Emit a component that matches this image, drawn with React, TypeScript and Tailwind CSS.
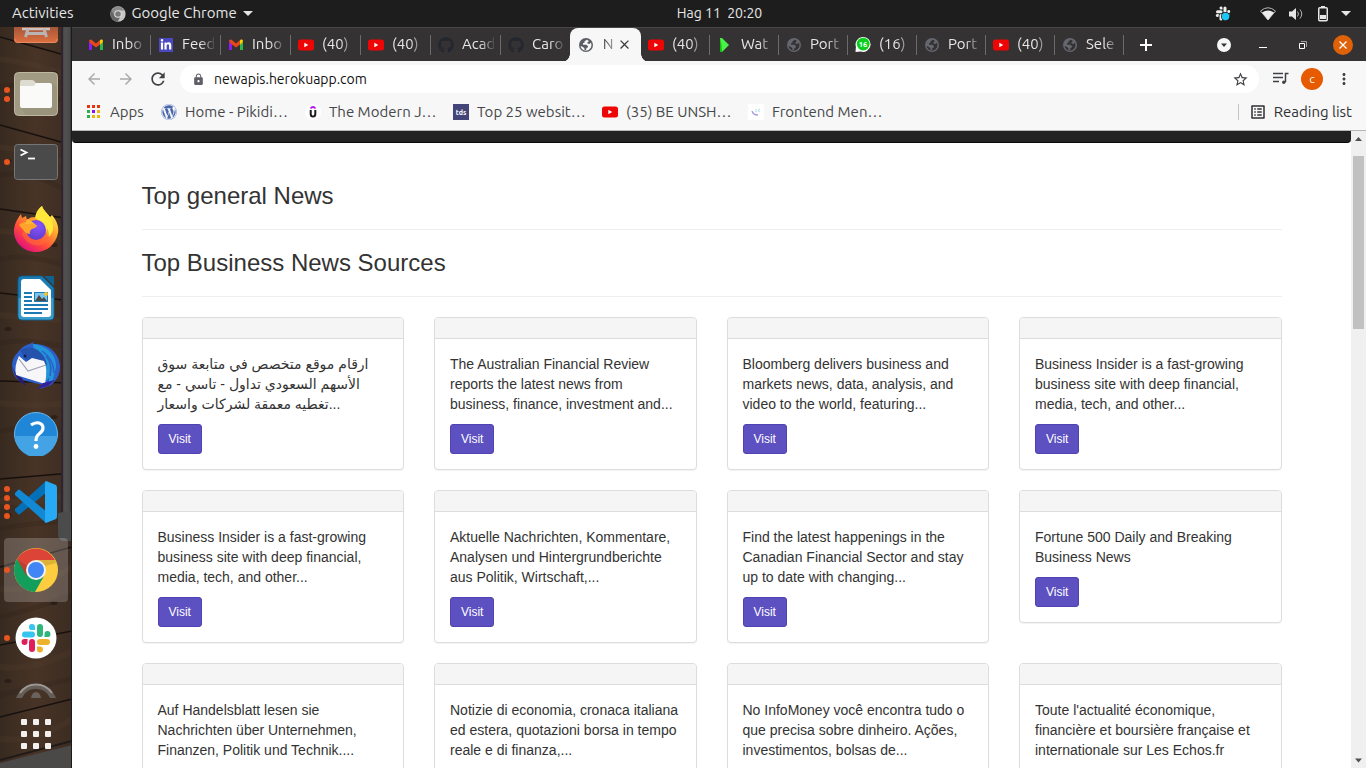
import type { ReactNode } from "react";
import { FaGithub, FaLinkedinIn, FaWordpress } from "react-icons/fa";
import {
  MdArrowBack,
  MdArrowForward,
  MdClose,
  MdLock,
  MdMoreVert,
  MdOutlineListAlt,
  MdRefresh,
  MdStarBorder,
} from "react-icons/md";

const WALL_SEAMS = [
  { y: 10, end: 30 },
  { y: 98, end: 118 },
  { y: 182, end: 192 },
  { y: 266, end: 274 },
  { y: 354, end: 356 },
  { y: 452, end: 446 },
  { y: 540, end: 520 },
  { y: 618, end: 604 },
  { y: 690, end: 672 },
];

function WoodBackdrop() {
  return (
    <svg className="absolute inset-0 h-full w-full" viewBox="0 0 72 741" preserveAspectRatio="none" aria-hidden="true">
      <defs>
        <linearGradient id="wood" x1="0" x2="1" y1="0" y2="0">
          <stop offset="0" stopColor="#382a20" />
          <stop offset="0.5" stopColor="#483426" />
          <stop offset="1" stopColor="#3c2c22" />
        </linearGradient>
        <linearGradient id="frame" x1="0" x2="1" y1="0" y2="0">
          <stop offset="0" stopColor="#3e3b40" />
          <stop offset="0.3" stopColor="#525253" />
          <stop offset="0.75" stopColor="#4a4a4b" />
          <stop offset="1" stopColor="#232323" />
        </linearGradient>
      </defs>
      <rect width="72" height="741" fill="url(#wood)" />
      {WALL_SEAMS.map(({ y, end }, i) => (
        <g key={y}>
          <path d={`M0 ${y} L72 ${end}`} stroke="#17110e" strokeWidth="1.400" fill="none" />
          <path d={`M0 ${y + 22} Q34 ${y + 26} 72 ${end + 20}`} stroke="#553e2d" strokeWidth="6" fill="none" opacity="0.25" />
          <path d={`M0 ${y + 50} Q28 ${y + 44} 72 ${end + 48}`} stroke="#2a1e17" strokeWidth="5" fill="none" opacity="0.25" />
          <ellipse cx={i % 2 ? 8 : 54} cy={y + 36} rx="3.500" ry="2" fill="#1f1611" opacity="0.6" />
        </g>
      ))}
      <rect x="62" width="10" height="514" fill="url(#frame)" />
      <rect x="61" width="2" height="485" fill="#2f2430" />
      <path d="M58 486 L72 484 V514 H62 Q58 512 58 506Z" fill="#4b4b4c" />
      <path d="M0 741 V736 L72 718 V741Z" fill="#4a4948" />
      <path d="M0 733 L72 714" stroke="#211b18" strokeWidth="2" />
      <rect x="71" width="1" height="741" fill="#1b1b1b" />
    </svg>
  );
}

function SoftwareIcon() {
  return (
    <svg width="44" height="17" viewBox="0 0 44 17">
      <defs>
        <linearGradient id="bag" x1="0" x2="0" y1="0" y2="1">
          <stop offset="0" stopColor="#a4563a" />
          <stop offset="1" stopColor="#e0703f" />
        </linearGradient>
      </defs>
      <path d="M0 0H44V12Q44 16 40 16H4Q0 16 0 12Z" fill="url(#bag)" />
      <path d="M0.500 12Q0.500 15.500 4 15.500H40Q43.500 15.500 43.500 12" fill="none" stroke="#e78a63" />
      <path d="M8 2H36" stroke="#c9c4c1" strokeWidth="2.500" />
      <path d="M14 2L11.500 10M30 2L32.500 10M13 6.500H31" stroke="#b9b4b2" strokeWidth="3" fill="none" />
    </svg>
  );
}

function FilesIcon() {
  return (
    <svg width="44" height="44" viewBox="0 0 44 44">
      <rect x="0.500" y="0.500" width="43" height="43" rx="4" fill="#a29b84" stroke="#bdb8a4" />
      <path d="M7 36L38 10L43 15V40L40 43H12Z" fill="#8f8974" opacity="0.4" />
      <path d="M6 10Q6 8 8 8H18Q20 8 21 10L23 12H36V20H6Z" fill="#dedbd0" />
      <path d="M6 14H20L22 11H36Q38 11 38 13V34Q38 36 36 36H8Q6 36 6 34Z" fill="#fafaf9" />
    </svg>
  );
}

function TerminalIcon() {
  return (
    <svg width="44" height="36" viewBox="0 0 44 36">
      <rect x="0.500" y="0.500" width="43" height="35" rx="3" fill="#4a4a4a" stroke="#767676" />
      <path d="M6.500 5.500L12.500 8.500L6.500 11.500" fill="none" stroke="#fff" strokeWidth="1.800" />
      <path d="M14 14.500H21" stroke="#fff" strokeWidth="1.800" />
    </svg>
  );
}

function FirefoxIcon() {
  return (
    <svg width="46" height="48" viewBox="0 0 46 48">
      <defs>
        <linearGradient id="ffBody" x1="0.85" y1="0.1" x2="0.25" y2="0.95">
          <stop offset="0" stopColor="#fff44f" />
          <stop offset="0.35" stopColor="#ffa22e" />
          <stop offset="0.7" stopColor="#ff4a3c" />
          <stop offset="1" stopColor="#e3127b" />
        </linearGradient>
        <radialGradient id="ffGlobe" cx="0.6" cy="0.3" r="0.8">
          <stop offset="0" stopColor="#8a52ff" />
          <stop offset="1" stopColor="#5a3bc4" />
        </radialGradient>
      </defs>
      <path d="M29 0C30 5 34 7 37 11L39 9C44 15 46 21 45 27C43 38 34 46 23 46C11 46 1 37 1 25C1 19 4 13 8 8L9 12L13 10L14 14C18 10 22 12 23 11Q24 4 29 0Z" fill="url(#ffBody)" />
      <path d="M29 0C31 6 39 10 40 19Q41 27 35 31L30 17L22 12Q23 4 29 0Z" fill="#ffe83c" />
      <circle cx="23" cy="24" r="10" fill="url(#ffGlobe)" />
      <path d="M13 20Q13 34 24 34Q33 33 34 22Q40 34 28 39Q14 41 9 28Z" fill="#ff6a35" opacity="0.6" />
      <path d="M6 19C9 15 15 16 17 18C21 18 24 19 24 20Q23 22 19 23Q16 25 17 28C12 28 10 23 6 19Z" fill="#ffa32b" />
      <path d="M14 13L12 18L18 18L24 20Q18 14 14 13Z" fill="#ffb72d" />
    </svg>
  );
}

function WriterIcon() {
  return (
    <svg width="38" height="46" viewBox="0 0 38 46">
      <path d="M5 1H25L37 13V41Q37 45 33 45H5Q1 45 1 41V5Q1 1 5 1Z" fill="#1b7cb3" stroke="#0e5b87" />
      <path d="M1.500 23H36.500V41Q36.500 44.500 33 44.500H5Q1.500 44.500 1.500 41Z" fill="#3b9bc9" />
      <path d="M27 1H37V11Z" fill="#0f628f" />
      <path d="M7 4H23L34 15V39Q34 42 31 42H7Q4 42 4 39V7Q4 4 7 4Z" fill="#fff" />
      <path d="M7 18H15M7 22H15M7 26H15M7 30H31M7 34H31M7 38H25" stroke="#1c7bb4" strokeWidth="2" />
      <rect x="17.500" y="17.500" width="13" height="9" fill="#7cc4e8" stroke="#1c7bb4" />
      <path d="M18 26L22 20L25 24L27 22L30 26Z" fill="#4a4a4a" />
      <circle cx="29" cy="19" r="2" fill="#f4c430" />
    </svg>
  );
}

function ThunderbirdIcon() {
  return (
    <svg width="48" height="48" viewBox="0 0 48 48">
      <path d="M6 10C11 3 18 2 22 0L21 2C36 1 48 11 48 25C48 34 43 41 37 44L28 47L31 43L6 37L12 42C4 38 0 31 0 24Q0 16 6 10Z" fill="#2c5fc9" />
      <path d="M21 2C33 3 45 12 44 25L41 38L37 41L37 35L33 41C35 28 31 17 22 13Z" fill="#2296d8" />
      <path d="M34 14Q41 22 38 34M30 9Q42 17 42 31" fill="none" stroke="#2c5fc9" strokeWidth="1.500" />
      <path d="M8 8Q20 2 28 10Q34 15 35 24L24 18L15 19Z" fill="#2452ad" />
      <path d="M7 14L14 20L20 16L32 19Q36 26 33 42L4 33Q2 24 7 14Z" fill="#f7f7fa" />
      <path d="M7 17L16 29L34 23" fill="none" stroke="#9ea3b5" strokeWidth="1.200" />
      <path d="M0 24Q3 38 14 44L10 36L4 33Z" fill="#281b70" />
      <path d="M31 41L25 47L36 44L43 38Z" fill="#33239b" />
      <circle cx="13" cy="14" r="1.500" fill="#14204b" />
    </svg>
  );
}

function HelpIcon() {
  return (
    <svg width="44" height="44" viewBox="0 0 44 44">
      <circle cx="22" cy="22" r="21.500" fill="#2087d8" stroke="#69b9ee" />
      <path d="M1 24H43A21 21 0 0 1 1 24Z" fill="#43a3e4" />
      <path d="M17 13Q21 10 25 11Q29 12 29 16Q29 19 25 22Q22 24 22 29" fill="none" stroke="#fff" strokeWidth="3.200" />
      <circle cx="22" cy="34.500" r="2.400" fill="#fff" />
    </svg>
  );
}

function CodeIcon() {
  return (
    <svg width="44" height="44" viewBox="0 0 44 44">
      <path d="M1 29L32 1L33 12L6 34Q5 35 4 34L1 31Z" fill="#0470b8" />
      <path d="M1 15L32 43L33 32L6 10Q5 9 4 10L1 13Z" fill="#1189d4" />
      <path d="M32 1L42 5Q43 6 43 8V36Q43 38 42 39L32 43L31 42V2Z" fill="#28a9f3" />
    </svg>
  );
}

function ChromeIcon() {
  return (
    <svg width="46" height="46" viewBox="0 0 46 46">
      <circle cx="23" cy="23" r="22" fill="#fdcd3f" />
      <path d="M23 23L13 29L4 12A22 22 0 0 1 42 13H23Z" fill="#db4437" />
      <path d="M23 13H42L43 16L32 19Z" fill="#c8a030" opacity="0.6" />
      <path d="M4 12L14 28L23 33L31 29L22 45A22 22 0 0 1 4 12Z" fill="#149e5b" />
      <path d="M4 12L13 29L16 20Z" fill="#a5352b" opacity="0.45" />
      <circle cx="23" cy="23" r="10" fill="#f1f1f1" />
      <circle cx="23" cy="23" r="8" fill="#4285f4" />
    </svg>
  );
}

function SlackMark({ mono = false }: { mono?: boolean }) {
  const c = mono ? ["#eee", "#eee", "#eee", "#eee"] : ["#36c5f0", "#2eb67d", "#ecb22e", "#e01e5a"];
  return (
    <g>
      <rect x="0" y="7.500" width="13" height="6" rx="3" fill={c[0]} />
      <path d="M13 6H10.250A3 3 0 1 1 13 3Z" fill={c[0]} />
      <rect x="15" y="0" width="6" height="13" rx="3" fill={c[1]} />
      <path d="M22.500 13V10.250A3 3 0 1 1 25.500 13Z" fill={c[1]} />
      <rect x="15" y="15" width="13" height="6" rx="3" fill={c[2]} />
      <path d="M15 22.500H17.750A3 3 0 1 1 15 25.500Z" fill={c[2]} />
      <rect x="7" y="15" width="6" height="13" rx="3" fill={c[3]} />
      <path d="M5.500 15V17.750A3 3 0 1 1 2.500 15Z" fill={c[3]} />
    </g>
  );
}

function SlackIcon() {
  return (
    <svg width="42" height="42" viewBox="0 0 42 42">
      <circle cx="21" cy="21" r="20.500" fill="#fff" />
      <g transform="translate(7 7)">
        <SlackMark />
      </g>
    </svg>
  );
}

function UpdaterIcon() {
  return (
    <svg width="44" height="15" viewBox="0 0 44 15">
      <path d="M2 15Q8 1 22 1T42 15H36Q32 6 22 6T8 15Z" fill="#655d57" />
      <path d="M6 10Q12 1.500 22 1.500T38 10" fill="none" stroke="#9b9691" strokeWidth="2" />
      <path d="M17 15Q18 9 22 9T27 15Z" fill="#69625d" />
    </svg>
  );
}

type DockItem = { name: string; icon: ReactNode; dots: number; active?: boolean };

const DOCK_ITEMS: DockItem[] = [
  { name: "Files", icon: <FilesIcon />, dots: 2 },
  { name: "Terminal", icon: <TerminalIcon />, dots: 1 },
  { name: "Firefox", icon: <FirefoxIcon />, dots: 0 },
  { name: "Writer", icon: <WriterIcon />, dots: 0 },
  { name: "Thunderbird", icon: <ThunderbirdIcon />, dots: 0 },
  { name: "Help", icon: <HelpIcon />, dots: 0 },
  { name: "Code", icon: <CodeIcon />, dots: 4 },
  { name: "Chrome", icon: <ChromeIcon />, dots: 1, active: true },
  { name: "Slack", icon: <SlackIcon />, dots: 1 },
];

function Dock() {
  return (
    <aside className="relative w-[72px] shrink-0 overflow-hidden bg-[#3a2a1f]">
      <WoodBackdrop />
      <nav className="relative flex h-full flex-col" aria-label="Dock">
        <button className="flex h-[33px] shrink-0 justify-center" aria-label="Software">
          <SoftwareIcon />
        </button>
        {DOCK_ITEMS.map((item) => (
          <button
            key={item.name}
            aria-label={item.name}
            className="grid h-[68px] shrink-0 grid-cols-[4px_6px_1fr_4px] items-center"
          >
            <span />
            <span className="z-10 flex flex-col gap-[3px]">
              {Array.from({ length: item.dots }, (_, i) => (
                <span key={i} className="size-[6px] rounded-full bg-[#e95420]" />
              ))}
            </span>
            <span
              className={
                item.active
                  ? "-ml-[6px] flex h-16 items-center justify-center rounded-[4px] bg-white/20"
                  : "-ml-[6px] flex h-16 items-center justify-center"
              }
            >
              {item.icon}
            </span>
          </button>
        ))}
        <div className="flex h-[26px] shrink-0 items-end justify-center">
          <UpdaterIcon />
        </div>
        <button className="mt-[21px] grid grid-cols-[6px_6px_6px] gap-[6px] self-center" aria-label="Show applications">
          {Array.from({ length: 9 }, (_, i) => (
            <span key={i} className="size-[6px] rounded-[1px] bg-[#f2f1f0]" />
          ))}
        </button>
      </nav>
    </aside>
  );
}

function TopBar() {
  return (
    <header className="flex h-[27px] shrink-0 items-center bg-[#1d1d1d] text-[15px] text-[#e6e6e6]">
      <div className="flex flex-1 items-center">
        <button className="ml-3">Activities</button>
        <button className="ml-9 flex items-center gap-[6px]">
          <svg width="16" height="16" viewBox="0 0 46 46" aria-hidden="true">
            <circle cx="23" cy="23" r="22" fill="#c7c7c7" />
            <path d="M23 23L13 29L4 12A22 22 0 0 1 42 13H23Z" fill="#8b8b8b" />
            <path d="M4 12L14 28L23 33L31 29L22 45A22 22 0 0 1 4 12Z" fill="#666" />
            <circle cx="23" cy="23" r="11" fill="#ddd" />
            <circle cx="23" cy="23" r="8" fill="#777" />
          </svg>
          Google Chrome
          <svg width="10" height="5" viewBox="0 0 10 5" aria-hidden="true">
            <path d="M0 0H10L5 5Z" fill="#e6e6e6" />
          </svg>
        </button>
      </div>
      <time className="pl-[88px] text-[14px] whitespace-pre">Hag 11  20:20</time>
      <div className="flex flex-1 items-center justify-end pr-[15px]">
        <svg width="16" height="16" viewBox="0 0 32 32" aria-label="Slack">
          <g transform="translate(2 1)">
            <SlackMark mono />
          </g>
          <circle cx="21" cy="21" r="9" fill="#1d1d1d" />
          <circle cx="21" cy="21" r="7.500" fill="#1dc7f5" />
        </svg>
        <svg className="ml-[29px]" width="16" height="14" viewBox="0 0 16 14" aria-label="Wireless">
          <path d="M0.500 4Q8 -2.500 15.500 4L8 13Z" fill="none" stroke="#b5b5b5" />
          <path d="M2 5.500Q8 1.500 14 5.500L8 13Z" fill="#ededed" />
        </svg>
        <svg className="ml-3" width="16" height="14" viewBox="0 0 16 14" aria-label="Volume">
          <path d="M1 4.500H4L8 1V13L4 9.500H1Z" fill="#e6e6e6" />
          <path d="M9.500 4.500Q11.500 7 9.500 9.500M12 2.500Q15.500 7 12 11.500" fill="none" stroke="#b5b5b5" />
        </svg>
        <svg className="ml-[14px]" width="10" height="16" viewBox="0 0 10 16" aria-label="Battery">
          <rect x="3" y="0" width="4" height="2" fill="#e6e6e6" />
          <rect x="0.750" y="1.750" width="8.500" height="13" rx="1" fill="none" stroke="#e6e6e6" strokeWidth="1.500" />
          <rect x="2" y="9" width="6" height="4" fill="#e6e6e6" />
        </svg>
        <svg className="ml-[13px]" width="10" height="5" viewBox="0 0 10 5" aria-hidden="true">
          <path d="M0 0H10L5 5Z" fill="#e6e6e6" />
        </svg>
      </div>
    </header>
  );
}

function GmailIcon() {
  return (
    <svg width="16" height="16" viewBox="0 0 16 16">
      <path d="M1 4V13H4V6Z" fill="#8a1cf5" />
      <path d="M12 6V13H15V4Z" fill="#2db84b" />
      <path d="M1 3.500Q2.500 1.500 4.500 3.500L8 6.500L11.500 3.500Q13.500 1.500 15 3.500L14 6L8 10.500L2 6Z" fill="#e8471c" />
      <path d="M12 3.200Q14 1.500 15 4L14 6L12 7.500Z" fill="#f5d400" />
    </svg>
  );
}

function LinkedinTile() {
  return (
    <span className="flex size-[14px] items-center justify-center bg-[#4c48c0]">
      <FaLinkedinIn size={12} color="#fff" />
    </span>
  );
}

function YoutubeIcon() {
  return (
    <svg width="16" height="16" viewBox="0 0 16 16">
      <rect y="2.500" width="16" height="11" rx="2.500" fill="#ee0505" />
      <path d="M6.300 5.700L10.300 8L6.300 10.300Z" fill="#fff" />
    </svg>
  );
}

function GlobeIcon({ tone = "#65676f", land = "#343233" }: { tone?: string; land?: string }) {
  return (
    <svg width="16" height="16" viewBox="0 0 16 16">
      <circle cx="8" cy="8" r="7" fill={tone} />
      <path
        d="M9 2.700L6.500 4.200V5.700L5 6.300V7.800H8.500L10 9.300V10.300L8.500 11L8 13L6.500 13.300V11.500L5 10L2.600 9Q3.200 13.400 8 13.700Q11.500 13.300 13 10.500Q14 8 13 5.500L11.500 7L9.500 6.500V5.300L11 4Z"
        fill={land}
      />
    </svg>
  );
}

function PlayIcon() {
  return (
    <svg width="16" height="16" viewBox="0 0 16 16">
      <path d="M3 1L5 1L12 8L5 15H3Z" fill="#4df04a" />
      <path d="M3 1V15H5L4.500 8Z" fill="#0fc00f" />
    </svg>
  );
}

function WhatsappBadge() {
  return (
    <svg width="17" height="17" viewBox="0 0 17 17">
      <path d="M0.500 16.500L1 11A8 8 0 1 1 6 16Z" fill="#fff" />
      <circle cx="8.700" cy="8" r="6.800" fill="#08cf1b" />
      <text x="8.500" y="11" fontSize="8" fontWeight="700" fill="#fff" textAnchor="middle">
        16
      </text>
    </svg>
  );
}

type Tab = { title: string; icon: ReactNode };

const LEFT_TABS: Tab[] = [
  { title: "Inbo", icon: <GmailIcon /> },
  { title: "Feed", icon: <LinkedinTile /> },
  { title: "Inbo", icon: <GmailIcon /> },
  { title: "(40)", icon: <YoutubeIcon /> },
  { title: "(40)", icon: <YoutubeIcon /> },
  { title: "Acad", icon: <FaGithub size={16} color="#252730" /> },
  { title: "Caro", icon: <FaGithub size={16} color="#252730" /> },
];

const RIGHT_TABS: Tab[] = [
  { title: "(40)", icon: <YoutubeIcon /> },
  { title: "Wat", icon: <PlayIcon /> },
  { title: "Port", icon: <GlobeIcon /> },
  { title: "(16)", icon: <WhatsappBadge /> },
  { title: "Port", icon: <GlobeIcon /> },
  { title: "(40)", icon: <YoutubeIcon /> },
  { title: "Sele", icon: <GlobeIcon /> },
];

function TabLabel({ tab }: { tab: Tab }) {
  return (
    <>
      <span className="flex w-4 shrink-0 justify-center">{tab.icon}</span>
      <span className="ml-2 w-[36px] text-left whitespace-nowrap [mask-image:linear-gradient(to_right,black_18px,transparent_34px)]">
        {tab.title}
      </span>
    </>
  );
}

function TabStrip() {
  return (
    <div className="flex h-[34px] shrink-0 items-center border-t border-[#484647] bg-[#343233] pl-2 text-[15px] text-[#e8e8e8]">
      {LEFT_TABS.map((tab, i) => (
        <button key={i} className="flex h-full w-[70px] shrink-0 items-center">
          <span className={`mr-[7px] h-5 w-px shrink-0 ${i > 0 ? "bg-[#6c6a6b]" : "bg-transparent"}`} />
          <TabLabel tab={tab} />
        </button>
      ))}
      <button className="relative flex h-[34px] w-[71px] shrink-0 items-center rounded-t-lg bg-[#f7f7f7] text-[#55565a] before:absolute before:bottom-0 before:-left-2 before:size-2 before:bg-[radial-gradient(circle_at_0_0,transparent_7.5px,#f7f7f7_8px)] after:absolute after:-right-2 after:bottom-0 after:size-2 after:bg-[radial-gradient(circle_at_100%_0,transparent_7.5px,#f7f7f7_8px)]">
        <span className="ml-2">
          <GlobeIcon tone="#5b5e66" land="#f7f7f7" />
        </span>
        <span className="ml-2 w-3 [mask-image:linear-gradient(to_right,black_30%,#0008)]">N</span>
        <MdClose size={15} color="#3c3d40" className="ml-[3px]" />
      </button>
      {RIGHT_TABS.map((tab, i) => (
        <button key={i} className="flex h-full w-[69px] shrink-0 items-center pl-[7px]">
          <TabLabel tab={tab} />
          <span className="ml-auto h-5 w-px shrink-0 bg-[#6c6a6b]" />
        </button>
      ))}
      <button className="ml-[15px]" aria-label="New tab">
        <svg width="14" height="14" viewBox="0 0 14 14">
          <path d="M7 1V13M1 7H13" stroke="#fff" strokeWidth="2" />
        </svg>
      </button>
      <div className="ml-auto flex items-center pr-[13px]">
        <button aria-label="Search tabs">
          <svg width="14" height="14" viewBox="0 0 14 14">
            <circle cx="7" cy="7" r="7" fill="#f7f7f7" />
            <path d="M4 5.500H10L7 9Z" fill="#343233" />
          </svg>
        </button>
        <button className="ml-7" aria-label="Minimize">
          <svg width="8" height="8" viewBox="0 0 8 8">
            <path d="M0 6.500H8" stroke="#fff" />
          </svg>
        </button>
        <button className="ml-8" aria-label="Restore">
          <svg width="8" height="8" viewBox="0 0 8 8">
            <path d="M0.500 2.500H5.500V7.500H0.500Z" fill="none" stroke="#fff" />
            <path d="M2 0.500H7.500V6" fill="none" stroke="#a5a4a4" />
          </svg>
        </button>
        <button className="ml-[26px] flex size-5 items-center justify-center rounded-full bg-[#df6208]" aria-label="Close window">
          <svg width="8" height="8" viewBox="0 0 8 8">
            <path d="M0.500 0.500L7.500 7.500M7.500 0.500L0.500 7.500" stroke="#fff" strokeWidth="1.300" />
          </svg>
        </button>
      </div>
    </div>
  );
}

function AddressRow() {
  return (
    <div className="flex h-9 shrink-0 items-center bg-[#f7f7f7] pr-[13px] pl-[13px] text-[#3f4044]">
      <button aria-label="Back">
        <MdArrowBack size={18} color="#ababab" />
      </button>
      <button className="ml-[14px]" aria-label="Forward">
        <MdArrowForward size={18} color="#ababab" />
      </button>
      <button className="ml-[13px]" aria-label="Reload">
        <MdRefresh size={20} />
      </button>
      <label className="ml-3 flex h-7 flex-1 items-center rounded-full bg-white pr-[10px] pl-3">
        <MdLock size={13} color="#5f6067" />
        <input
          aria-label="Address"
          defaultValue="newapis.herokuapp.com"
          className="ml-[9px] flex-1 bg-transparent text-[14px] text-[#111] outline-none"
        />
        <MdStarBorder size={17} />
      </label>
      <button className="ml-[13px]" aria-label="Media controls">
        <svg width="18" height="18" viewBox="0 0 18 18" fill="none" stroke="#3f4044" strokeWidth="1.500">
          <path d="M1 3.500H11M1 7.500H11M1 11.500H7" />
          <path d="M16.500 3.500H13.500V12" />
          <circle cx="11.800" cy="12.300" r="1.700" fill="#3f4044" stroke="none" />
        </svg>
      </button>
      <button
        className="ml-[11px] flex size-[22px] items-center justify-center rounded-full bg-[#e65a00] text-[12px] text-white"
        aria-label="Profile"
      >
        c
      </button>
      <button className="ml-3" aria-label="Menu">
        <MdMoreVert size={18} />
      </button>
    </div>
  );
}

function AppsIcon() {
  const colors = ["#e8350f", "#e8350f", "#e8350f", "#2dae4a", "#8a12ee", "#e8b90c", "#2dae4a", "#e8b90c", "#e8b90c"];
  return (
    <svg width="14" height="14" viewBox="0 0 14 14">
      {colors.map((c, i) => (
        <rect key={i} x={(i % 3) * 5} y={Math.floor(i / 3) * 5} width="3" height="3" fill={c} />
      ))}
    </svg>
  );
}

const BOOKMARKS = [
  { title: "Home - Pikidi…", width: "w-[128px]", icon: <FaWordpress size={16} color="#4a66ad" /> },
  {
    title: "The Modern J…",
    width: "w-[132px]",
    icon: (
      <svg width="16" height="16" viewBox="0 0 16 16">
        <circle cx="8" cy="8" r="8" fill="#fff" />
        <path d="M5.500 4.500Q8 1.500 10.500 4.500" fill="none" stroke="#b815ea" strokeWidth="1.800" />
        <path d="M5.700 6V10Q5.700 12.500 8 12.500T10.300 10V6" fill="none" stroke="#1c1c1c" strokeWidth="2" />
      </svg>
    ),
  },
  {
    title: "Top 25 websit…",
    width: "w-[133px]",
    icon: (
      <svg width="16" height="16" viewBox="0 0 16 16">
        <rect width="16" height="16" fill="#434478" />
        <text x="8" y="10.500" fontSize="7" fontWeight="700" fill="#fff" textAnchor="middle">
          tds
        </text>
      </svg>
    ),
  },
  { title: "(35) BE UNSH…", width: "w-[130px]", icon: <YoutubeIcon /> },
  {
    title: "Frontend Men…",
    width: "w-[136px]",
    icon: (
      <svg width="16" height="16" viewBox="0 0 16 16">
        <rect width="16" height="16" fill="#fff" />
        <path d="M4 7Q5 11 10 11" fill="none" stroke="#a79ae0" strokeWidth="1.300" />
        <path d="M8 5V8M12 5L10 6.500L12 8" fill="none" stroke="#a9dfe8" />
      </svg>
    ),
  },
];

function BookmarksBar() {
  return (
    <div className="flex h-[34px] shrink-0 items-center border-b border-[#b8b6b7] bg-[#f7f7f7] pr-[14px] pb-[3px] pl-[15px] text-[15px] text-[#464749]">
      <a href="#apps" className="flex w-[58px] items-center gap-[9px]">
        <AppsIcon />
        Apps
      </a>
      <div className="ml-4 flex gap-4">
        {BOOKMARKS.map((b) => (
          <a key={b.title} href="#bookmark" className={`flex items-center gap-2 whitespace-nowrap ${b.width}`}>
            <span className="w-4 shrink-0">{b.icon}</span>
            {b.title}
          </a>
        ))}
      </div>
      <button className="ml-auto flex items-center text-[#303134]">
        <span className="mr-[10px] h-4 w-px bg-[#c4c4c4]" />
        <MdOutlineListAlt size={18} className="mr-[7px]" />
        Reading list
      </button>
    </div>
  );
}

const SOURCES = [
  "ارقام موقع متخصص في متابعة سوق الأسهم السعودي تداول - تاسي - مع تغطيه معمقة لشركات واسعار...",
  "The Australian Financial Review reports the latest news from business, finance, investment and...",
  "Bloomberg delivers business and markets news, data, analysis, and video to the world, featuring...",
  "Business Insider is a fast-growing business site with deep financial, media, tech, and other...",
  "Business Insider is a fast-growing business site with deep financial, media, tech, and other...",
  "Aktuelle Nachrichten, Kommentare, Analysen und Hintergrundberichte aus Politik, Wirtschaft,...",
  "Find the latest happenings in the Canadian Financial Sector and stay up to date with changing...",
  "Fortune 500 Daily and Breaking Business News",
  "Auf Handelsblatt lesen sie Nachrichten über Unternehmen, Finanzen, Politik und Technik....",
  "Notizie di economia, cronaca italiana ed estera, quotazioni borsa in tempo reale e di finanza,...",
  "No InfoMoney você encontra tudo o que precisa sobre dinheiro. Ações, investimentos, bolsas de...",
  "Toute l'actualité économique, financière et boursière française et internationale sur Les Echos.fr",
];

function SourceCard({ text }: { text: string }) {
  return (
    <article className="rounded-[4px] border border-[#ddd] bg-white shadow-[0_1px_1px_rgba(0,0,0,0.05)]">
      <div className="h-[21px] rounded-t-[3px] border-b border-[#ddd] bg-[#f5f5f5]" />
      <div className="p-[15px]">
        <p className="mb-[10px]">{text}</p>
        <a
          href="#visit"
          className="inline-flex h-[30px] items-center rounded-[3px] border border-[#5142b3] bg-[#5d50c0] px-[10px] align-top text-[12px] text-white"
        >
          Visit
        </a>
      </div>
    </article>
  );
}

function NewsPage() {
  return (
    <main className="min-w-0 flex-1 overflow-hidden bg-white font-['Liberation_Sans',Arial,'DejaVu_Sans',sans-serif] text-[14px] leading-5 text-[#333]">
      <div className="h-3 rounded-b-[4px] border-b border-[#080808] bg-[#222]" />
      <div className="mx-auto max-w-[1170px] px-[15px] pt-10">
        <h3 className="text-[24px] leading-[26px]">Top general News</h3>
        <hr className="my-5 border-[#eee]" />
        <h3 className="text-[24px] leading-[26px]">Top Business News Sources</h3>
        <hr className="my-5 border-[#eee]" />
        <div className="grid grid-cols-4 items-start gap-x-[30px] gap-y-5">
          {SOURCES.map((text, i) => (
            <SourceCard key={i} text={text} />
          ))}
        </div>
      </div>
    </main>
  );
}

function Scrollbar() {
  return (
    <div className="flex w-[15px] shrink-0 flex-col items-center bg-[#f0f0f0]" aria-hidden="true">
      <svg width="15" height="15" viewBox="0 0 15 15">
        <path d="M4 10H11L7.500 6Z" fill="#505050" />
      </svg>
      <div className="mt-[10px] h-[173px] w-[11px] bg-[#c1c1c1]" />
      <svg className="mt-auto" width="15" height="15" viewBox="0 0 15 15">
        <path d="M4 5.500H11L7.500 9.500Z" fill="#505050" />
      </svg>
    </div>
  );
}

export default function App() {
  return (
    <div className="flex h-screen flex-col overflow-hidden bg-[#1d1d1d] font-['Ubuntu','Noto_Sans',sans-serif]">
      <TopBar />
      <div className="flex min-h-0 flex-1">
        <Dock />
        <section className="flex min-w-0 flex-1 flex-col">
          <TabStrip />
          <AddressRow />
          <BookmarksBar />
          <div className="flex min-h-0 flex-1 bg-white">
            <NewsPage />
            <Scrollbar />
          </div>
        </section>
      </div>
    </div>
  );
}
